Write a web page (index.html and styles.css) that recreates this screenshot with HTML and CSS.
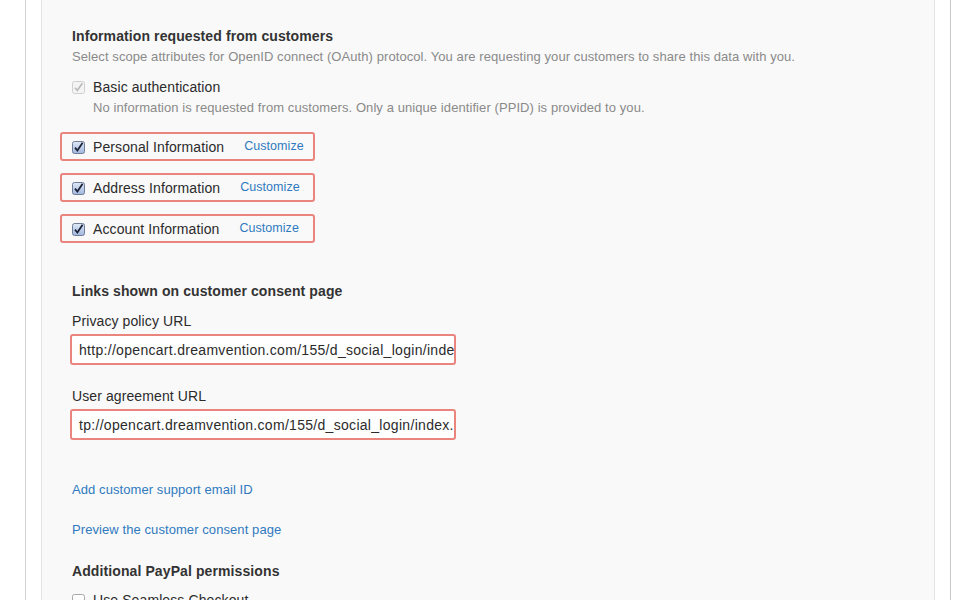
FILE: index.html
```html
<!DOCTYPE html>
<html>
<head>
<meta charset="utf-8">
<link rel="stylesheet" href="styles.css">
</head>
<body>
<div class="frame">
  <div class="panel">
    <h3 class="heading">Information requested from customers</h3>
    <p class="subtitle">Select scope attributes for OpenID connect (OAuth) protocol. You are requesting your customers to share this data with you.</p>

    <div class="check-row basic">
      <svg class="cb" width="13" height="13" viewBox="0 0 13 13"><rect x="0.5" y="0.5" width="12" height="12" rx="2" fill="#f4f4f4" stroke="#cfcfcf"/><path d="M3 6.8 L5.3 9.4 L10.4 2.2" fill="none" stroke="#b9b9b9" stroke-width="1.6"/></svg>
      <span class="label">Basic authentication</span>
    </div>
    <p class="helper">No information is requested from customers. Only a unique identifier (PPID) is provided to you.</p>

    <div class="scope-list">
      <div class="scope-box">
        <svg class="cb" width="13" height="13" viewBox="0 0 13 13"><defs><linearGradient id="g1" x1="0" y1="0" x2="0" y2="1"><stop offset="0" stop-color="#dfe9f7"/><stop offset="1" stop-color="#9fb6dc"/></linearGradient></defs><rect x="0.5" y="0.5" width="12" height="12" rx="2" fill="url(#g1)" stroke="#6f7c96"/><path d="M3 6.6 L5.4 9.6 L10.6 1.8" fill="none" stroke="#1c2236" stroke-width="1.8"/></svg>
        <span class="label">Personal Information</span>
        <a class="link customize">Customize</a>
      </div>
      <div class="scope-box">
        <svg class="cb" width="13" height="13" viewBox="0 0 13 13"><rect x="0.5" y="0.5" width="12" height="12" rx="2" fill="url(#g1)" stroke="#6f7c96"/><path d="M3 6.6 L5.4 9.6 L10.6 1.8" fill="none" stroke="#1c2236" stroke-width="1.8"/></svg>
        <span class="label">Address Information</span>
        <a class="link customize">Customize</a>
      </div>
      <div class="scope-box">
        <svg class="cb" width="13" height="13" viewBox="0 0 13 13"><rect x="0.5" y="0.5" width="12" height="12" rx="2" fill="url(#g1)" stroke="#6f7c96"/><path d="M3 6.6 L5.4 9.6 L10.6 1.8" fill="none" stroke="#1c2236" stroke-width="1.8"/></svg>
        <span class="label">Account Information</span>
        <a class="link customize">Customize</a>
      </div>
    </div>

    <h3 class="heading links-heading">Links shown on customer consent page</h3>
    <div class="field-label first">Privacy policy URL</div>
    <div class="url-input"><span class="url-text">http://opencart.dreamvention.com/155/d_social_login/index.php?route=information/information&amp;information_id=3</span></div>
    <div class="field-label">User agreement URL</div>
    <div class="url-input"><span class="url-text">tp://opencart.dreamvention.com/155/d_social_login/index.php?route=information/information&amp;information_id=5</span></div>

    <a class="link block-link add-link">Add customer support email ID</a>
    <a class="link block-link preview-link">Preview the customer consent page</a>

    <h3 class="heading perm-heading">Additional PayPal permissions</h3>
    <div class="check-row seamless">
      <svg class="cb" width="13" height="13" viewBox="0 0 13 13"><rect x="0.5" y="0.5" width="12" height="12" rx="2" fill="#fdfdfd" stroke="#a9a9a9"/></svg>
      <span class="label">Use Seamless Checkout</span>
    </div>
  </div>
</div>
</body>
</html>
```

FILE: styles.css
```css
html, body {
  margin: 0;
  padding: 0;
  background: #ffffff;
  height: 100%;
  overflow: hidden;
}

body {
  font-family: "Liberation Sans", Arial, sans-serif;
  color: #333333;
}

.frame {
  margin-left: 25px;
  width: 926px;
  height: 100%;
  border-left: 1px solid #d4d4d4;
  border-right: 1px solid #c9c9c9;
  padding: 0 15px;
  box-sizing: border-box;
}

.panel {
  height: 100%;
  background: #f9f9f9;
  border-left: 1px solid #e4e4e4;
  border-right: 1px solid #e4e4e4;
  padding: 26px 30px 0 30px;
  box-sizing: border-box;
}

.heading {
  margin: 0;
  font-size: 14px;
  line-height: 20px;
  font-weight: bold;
  color: #333333;
  letter-spacing: 0.1px;
}

.subtitle {
  margin: 2px 0 0 0;
  font-size: 13px;
  line-height: 18px;
  color: #8a8a8a;
  letter-spacing: 0.08px;
}

.check-row {
  display: flex;
  align-items: center;
  height: 20px;
}

.basic {
  margin-top: 11px;
}

.cb {
  flex: none;
  display: block;
  margin-right: 8px;
}

.label {
  font-size: 14px;
  line-height: 20px;
  color: #2b2b2b;
  letter-spacing: 0.1px;
}

.helper {
  margin: 2px 0 0 21px;
  font-size: 13px;
  line-height: 18px;
  color: #8a8a8a;
  letter-spacing: 0.08px;
}

.scope-list {
  margin-top: 15px;
  margin-left: -12px;
  display: flex;
  flex-direction: column;
  gap: 12px;
}

.scope-box {
  width: 255px;
  height: 29px;
  box-sizing: border-box;
  border: 2px solid #ea857e;
  border-radius: 3px;
  display: flex;
  align-items: center;
  padding-left: 10px;
  padding-top: 1px;
}

.link {
  color: #3079c0;
  text-decoration: none;
  cursor: pointer;
}

.customize {
  margin-left: 20px;
  font-size: 12.5px;
  line-height: 18px;
  position: relative;
  top: -1px;
  letter-spacing: 0.05px;
}

.links-heading {
  margin-top: 38px;
}

.field-label {
  margin-top: 21px;
  font-size: 14px;
  line-height: 20px;
  color: #2b2b2b;
  letter-spacing: 0.1px;
}

.field-label.first {
  margin-top: 10px;
}

.url-input {
  margin-top: 3px;
  margin-left: -2px;
  width: 386px;
  height: 31px;
  box-sizing: border-box;
  border: 2px solid #ea857e;
  border-radius: 3px;
  background: #ffffff;
  padding: 0 5px 0 7px;
  display: flex;
  align-items: center;
  overflow: hidden;
  white-space: nowrap;
}

.url-text {
  font-size: 14px;
  line-height: 20px;
  color: #2b2b2b;
  letter-spacing: 0.3px;
}

.block-link {
  display: block;
  font-size: 13px;
  line-height: 18px;
  letter-spacing: 0.08px;
}

.add-link {
  margin-top: 41px;
}

.preview-link {
  margin-top: 22px;
}

.perm-heading {
  margin-top: 22px;
}

.seamless {
  margin-top: 9px;
}
```
